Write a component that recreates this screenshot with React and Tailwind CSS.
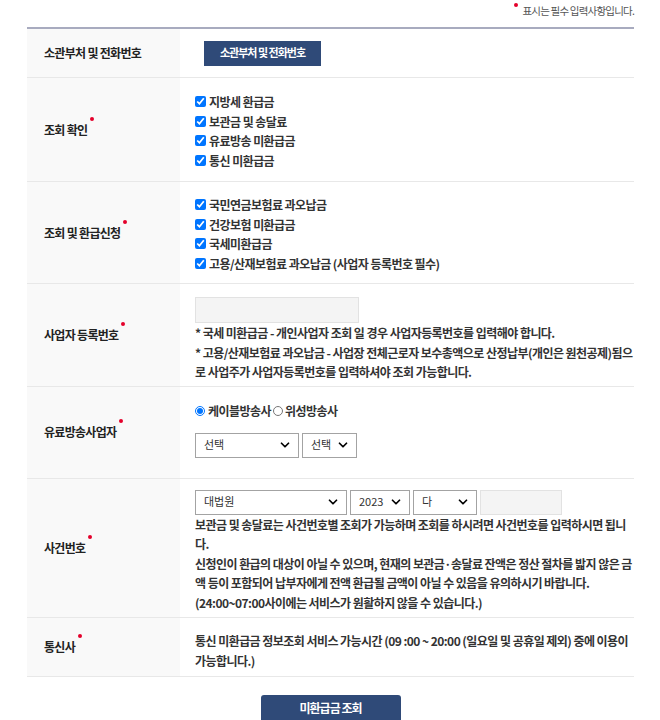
import { ChevronDown } from 'lucide-react'

const FONT = { fontFamily: '"Noto Sans CJK KR", "Noto Sans", sans-serif' }

function Dot({ className = '' }) {
  return <span className={`inline-block w-[4px] h-[4px] rounded-full bg-[#e4002b] align-top ${className}`} />
}

function Row({ label, required, className = '', children }) {
  return (
    <div className="flex border-b border-[#e8e8e8]">
      <div className="w-[153px] shrink-0 bg-[#f9f9f9] flex items-center pl-[17px]">
        <span className="text-[12px] font-bold text-[#222] tracking-[-0.7px]">
          {label}
          {required && <Dot className="ml-[3px] -mt-[4px]" />}
        </span>
      </div>
      <div className={`flex-1 pl-[15px] text-[12px] font-bold text-[#333] tracking-[-0.55px] leading-[19.5px] ${className}`}>
        {children}
      </div>
    </div>
  )
}

function Check({ children }) {
  return (
    <label className="flex items-center gap-[3px] h-[19.5px]">
      <input type="checkbox" defaultChecked className="w-[11px] h-[11px] m-0" />
      <span>{children}</span>
    </label>
  )
}

function Select({ value, width }) {
  return (
    <div
      className="h-[25px] border border-[#a3a3a3] bg-white flex items-center justify-between pl-[8px] pr-[6px] text-[11px] font-normal text-[#333] tracking-normal"
      style={{ width }}
    >
      <span>{value}</span>
      <ChevronDown size={14} strokeWidth={3} className="text-black" />
    </div>
  )
}

export default function App() {
  return (
    <div className="bg-white min-h-[720px] pl-[27px] pr-[26px]" style={FONT}>
      <div className="h-[27px] flex items-start justify-end pt-[3px] text-[10.5px] text-[#555] tracking-[-0.8px]">
        <Dot />
        <span className="ml-[4px]">표시는 필수 입력사항입니다.</span>
      </div>
      <div className="border-t-2 border-[#a8abbf]">
        <Row label="소관부처 및 전화번호" className="h-[48px] flex items-center pl-[24px]">
          <button className="w-[117px] h-[25px] bg-[#2f4a78] text-white text-[11px] font-bold tracking-[-1px]">
            소관부처 및 전화번호
          </button>
        </Row>

        <Row label="조회 확인" required className="pt-[14px] pb-[11px]">
          <Check>지방세 환급금</Check>
          <Check>보관금 및 송달료</Check>
          <Check>유료방송 미환급금</Check>
          <Check>통신 미환급금</Check>
        </Row>

        <Row label="조회 및 환급신청" required className="pt-[13px] pb-[10px]">
          <Check>국민연금보험료 과오납금</Check>
          <Check>건강보험 미환급금</Check>
          <Check>국세미환급금</Check>
          <Check>고용/산재보험료 과오납금 (사업자 등록번호 필수)</Check>
        </Row>

        <Row label="사업자 등록번호" required className="pt-[13px] pb-[4px]">
          <div className="w-[164px] h-[26px] bg-[#f4f4f4] border border-[#e2e2e2]" />
          <p>* 국세 미환급금 - 개인사업자 조회 일 경우 사업자등록번호를 입력해야 합니다.</p>
          <p>* 고용/산재보험료 과오납금 - 사업장 전체근로자 보수총액으로 산정납부(개인은 원천공제)됨으로 사업주가 사업자등록번호를 입력하셔야 조회 가능합니다.</p>
        </Row>

        <Row label="유료방송사업자" required className="pt-[14px] pb-[20px]">
          <div className="flex items-center h-[20px]">
            <input type="radio" name="bc" defaultChecked className="w-[10px] h-[10px] m-0 mr-[3px]" />
            <span>케이블방송사</span>
            <input type="radio" name="bc" className="w-[10px] h-[10px] m-0 mx-[2px]" />
            <span>위성방송사</span>
          </div>
          <div className="flex gap-[3px] mt-[12px]">
            <Select value="선택" width={104} />
            <Select value="선택" width={55} />
          </div>
        </Row>

        <Row label="사건번호" required className="pt-[11px] pb-[5px]">
          <div className="flex gap-[3px]">
            <Select value="대법원" width={152} />
            <Select value="2023" width={60} />
            <Select value="다" width={64} />
            <div className="w-[82px] h-[25px] bg-[#f4f4f4] border border-[#e2e2e2]" />
          </div>
          <p>보관금 및 송달료는 사건번호별 조회가 가능하며 조회를 하시려면 사건번호를 입력하시면 됩니다.</p>
          <p>신청인이 환급의 대상이 아닐 수 있으며, 현재의 보관금·송달료 잔액은 정산 절차를 밟지 않은 금액 등이 포함되어 납부자에게 전액 환급될 금액이 아닐 수 있음을 유의하시기 바랍니다.</p>
          <p>(24:00~07:00사이에는 서비스가 원활하지 않을 수 있습니다.)</p>
        </Row>

        <Row label="통신사" required className="pt-[13px] pb-[6px]">
          <p>통신 미환급금 정보조회 서비스 가능시간 (09 :00 ~ 20:00 (일요일 및 공휴일 제외) 중에 이용이 가능합니다.)</p>
        </Row>
      </div>

      <div className="flex justify-center pt-[18px]">
        <button className="w-[140px] h-[36px] rounded-t-[3px] bg-[#2f4a78] text-white text-[12px] font-bold tracking-[-1px] pb-[10px]">
          미환급금 조회
        </button>
      </div>
    </div>
  )
}
